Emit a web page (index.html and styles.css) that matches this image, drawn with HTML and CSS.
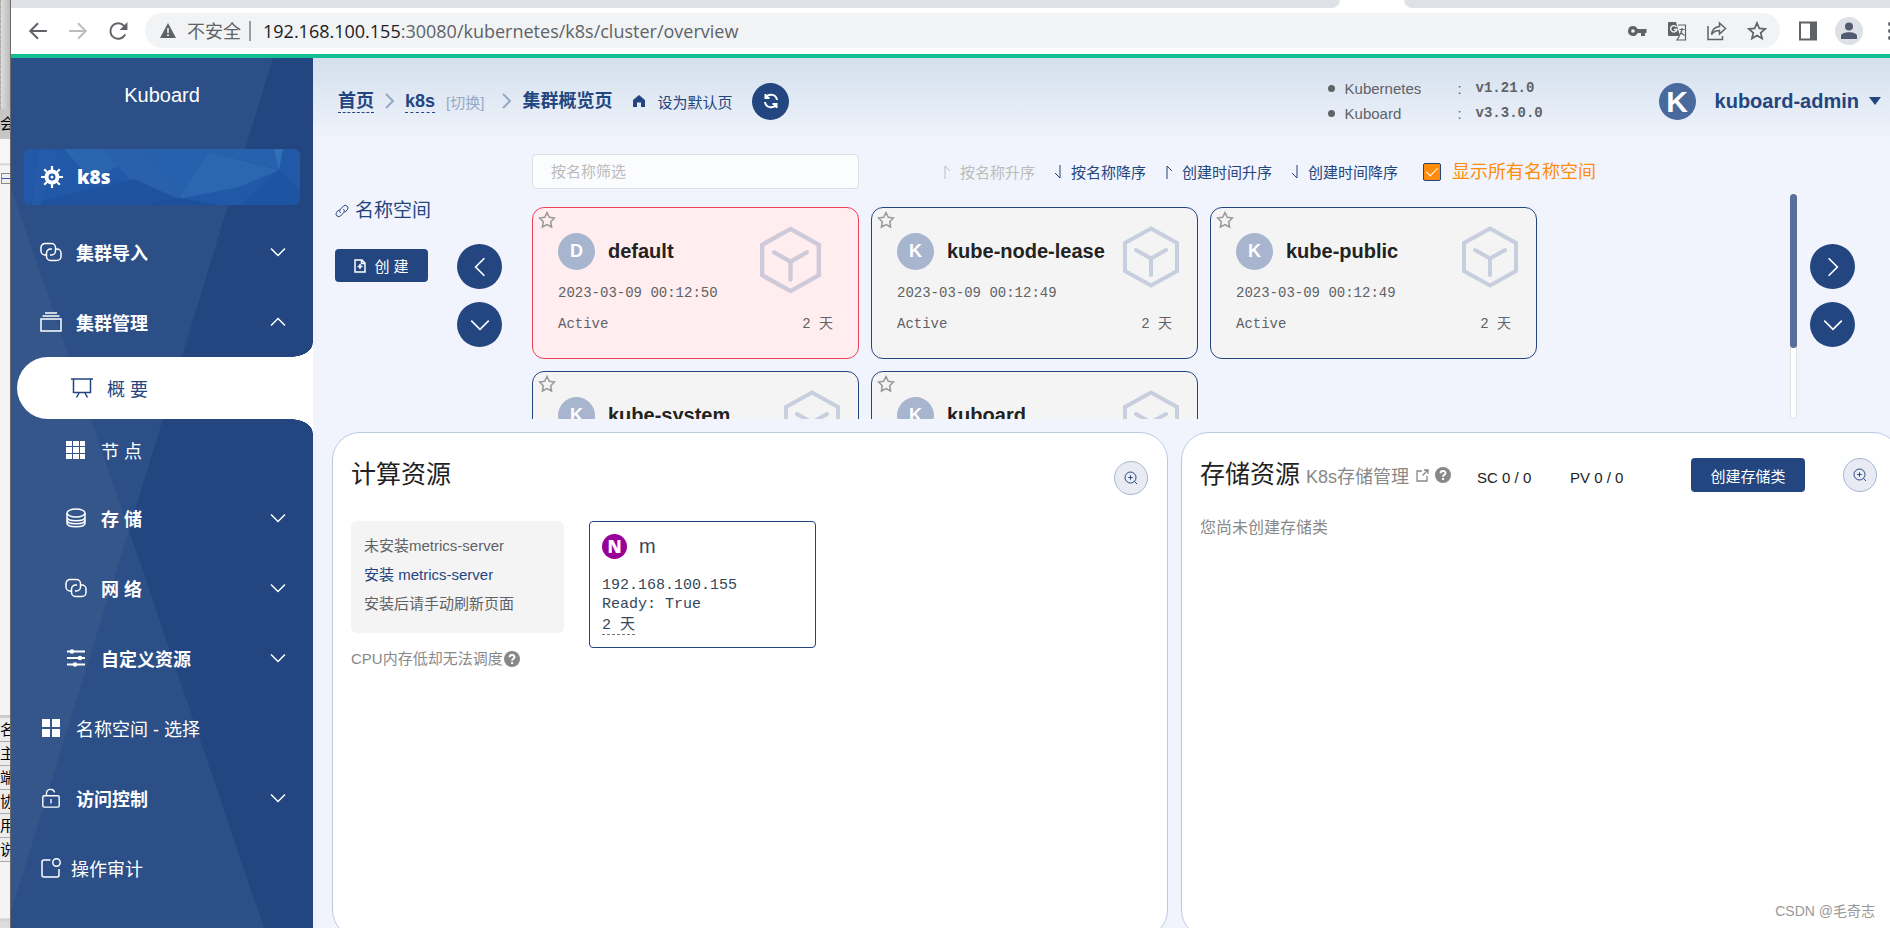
FILE: index.html
```html
<!DOCTYPE html>
<html lang="zh-CN">
<head>
<meta charset="utf-8">
<title>Kuboard</title>
<link rel="stylesheet" href="styles.css">
</head>
<body>
<svg class="sprite" aria-hidden="true">
  <symbol id="i-down" viewBox="0 0 16 16"><path d="M1 4.500l7 7 7-7"/></symbol>
  <symbol id="i-up" viewBox="0 0 16 16"><path d="M1 11.500l7-7 7 7"/></symbol>
  <symbol id="i-right" viewBox="0 0 16 16"><path d="M4.500 1l7 7-7 7"/></symbol>
  <symbol id="i-left" viewBox="0 0 16 16"><path d="M11.500 1l-7 7 7 7"/></symbol>
  <symbol id="i-sep" viewBox="0 0 9 16"><path d="M1 1l7 7-7 7"/></symbol>
  <symbol id="i-link" viewBox="0 0 22 20"><path d="M6 13H5a4 4 0 0 1-4-4V5.500a4 4 0 0 1 4-4h6.500a4 4 0 0 1 4 4V9a4 4 0 0 1-4 4H10M16 7h1a4 4 0 0 1 4 4v3.500a4 4 0 0 1-4 4h-6.500a4 4 0 0 1-4-4V11a4 4 0 0 1 4-4H12"/></symbol>
  <symbol id="i-star" viewBox="0 0 18 18"><path d="M9 1.500l2.300 4.800 5.200.7-3.800 3.700.9 5.300L9 13.500 4.400 16l.9-5.300L1.500 7l5.200-.7z"/></symbol>
  <symbol id="i-cube" viewBox="0 0 56 62"><path stroke-width="4" d="M28 2.500L54 17v28L28 59.500 2 45V17z"/><path stroke-width="4" stroke-linecap="round" d="M13 24l15 8.500L43 24M28 32.500V49"/></symbol>
  <symbol id="i-zoom" viewBox="0 0 14 14"><circle cx="6.500" cy="6.500" r="5.500"/><path d="M4.300 6.500h4.400M6.500 4.300v4.400M10.500 10.500l2.500 2.500"/></symbol>
  <symbol id="i-help" viewBox="0 0 16 16"><circle cx="8" cy="8" r="8" fill="#888" stroke="none"/><path stroke="#fff" stroke-width="2" d="M5.600 6.300c0-3.200 4.900-3.100 4.900-.2 0 1.700-2.400 1.700-2.400 3.600M8.100 11v2"/></symbol>
  <symbol id="i-asc" viewBox="0 0 8 14"><path d="M2 14V1l5 5"/></symbol>
  <symbol id="i-desc" viewBox="0 0 8 14"><path d="M6 0v13L1 8"/></symbol>
</svg>

<div class="desktop">
  <div class="behind" aria-hidden="true">
    <div class="behind-top"></div>
    <div class="behind-tab">会</div>
    <div class="behind-tree"><span class="tree-box"></span></div>
    <div class="behind-blank"></div>
    <div class="behind-row">名</div>
    <div class="behind-row">主</div>
    <div class="behind-row">端</div>
    <div class="behind-row">协</div>
    <div class="behind-row">用</div>
    <div class="behind-row">说</div>
    <div class="behind-foot"></div>
  </div>

  <div class="window">
    <div class="tabs"><div class="tabs-left"></div><div class="tabs-right"></div></div>
    <div class="toolbar">
      <button class="nav" aria-label="后退"><svg viewBox="0 0 18 18"><path d="M17 9H2M9 2L2 9l7 7"/></svg></button>
      <button class="nav nav-off" aria-label="前进"><svg viewBox="0 0 18 18"><path d="M1 9h15M9 2l7 7-7 7"/></svg></button>
      <button class="nav" aria-label="刷新"><svg viewBox="0 0 18 18"><path d="M15.500 12A7 7 0 1 1 14.500 4.500L16 6.500"/><path fill="#5f6368" stroke="none" d="M17.500 1v7h-7z"/></svg></button>
      <div class="address">
        <svg class="warn" viewBox="0 0 16 15"><path fill="#5f6368" d="M8 0l8 15H0z"/><path fill="#f1f3f4" d="M7.200 5h1.600v5H7.200zM7.200 11.300h1.600v1.700H7.200z"/></svg>
        <span class="insecure">不安全</span>
        <span class="url"><b>192.168.100.155</b>:30080/kubernetes/k8s/cluster/overview</span>
        <svg class="tool" viewBox="0 0 20 20"><path fill="#5f6368" fill-rule="evenodd" d="M6 5a5 5 0 1 0 4.600 7H14v3h4v-3h1.500V8h-9A5 5 0 0 0 6 5zm0 3.200a1.800 1.800 0 1 1 0 3.600 1.800 1.800 0 0 1 0-3.600z"/></svg>
        <svg class="tool" viewBox="0 0 20 20"><path fill="#5f6368" d="M2 1h7l4 14H2a1.500 1.500 0 0 1-1-1V2a1 1 0 0 1 1-1z"/><path fill="none" stroke="#f1f3f4" stroke-width="1.400" d="M9.500 6A3.200 3.200 0 1 0 10 8.500H7"/><path fill="none" stroke="#5f6368" stroke-width="1.200" d="M11 4h7.500v15H10l2.500-4M12.500 8.500h5M15 7v1.500c0 3-1 4-2.500 5.500M13.500 10.500c1 2 2 3 4 4"/></svg>
        <svg class="tool" viewBox="0 0 20 20"><path fill="none" stroke="#5f6368" stroke-width="1.500" d="M1 5v13.500h14.500V15M12.500 2l6 5.500-6 5.500v-3.500c-4 0-6 1-8 4C5 9.500 7.500 6 12.500 5.500z"/></svg>
        <svg class="tool" viewBox="0 0 20 20"><path fill="none" stroke="#5f6368" stroke-width="1.700" d="M10 2l2.300 5.400 5.900.5-4.500 3.900 1.400 5.700L10 14.400l-5.100 3.100 1.400-5.700-4.500-3.900 5.900-.5z"/></svg>
      </div>
      <svg class="side-icon" viewBox="0 0 20 20"><path fill="none" stroke="#5f6368" stroke-width="2" d="M2 1.500h16v17H2z"/><path fill="#5f6368" d="M12 1h7v18h-7z"/></svg>
      <span class="profile"><svg viewBox="0 0 16 18"><circle cx="8" cy="4.500" r="4"/><path d="M0 17v-3c0-5 16-5 16 0v3z"/></svg></span>
      <svg class="dots" viewBox="0 0 4 20"><circle cx="2" cy="3" r="2"/><circle cx="2" cy="10" r="2"/><circle cx="2" cy="17" r="2"/></svg>
    </div>

    <div class="page">
      <aside class="sidebar">
        <svg class="facets" viewBox="0 0 302 870" preserveAspectRatio="none"><path fill="#34568a" d="M0 130l118 342L0 854z"/><path fill="#234681" d="M262 0h40v870h-49L118 472z"/></svg>
        <h1 class="brand">Kuboard</h1>
        <a class="cluster" href="#">
          <svg class="cluster-bg" viewBox="0 0 276 56" preserveAspectRatio="none"><path fill="#2159a8" d="M0 0h276v56H0z"/><path fill="#2a65b0" d="M40 0h78L94 17 68 32z"/><path fill="#2961ac" d="M76 0h42l37 50-48-18L94 17z"/><path fill="#2b66b0" d="M185 3l-30 47 60-12 40-17z"/><path fill="#2b68b2" d="M118 0h137v20l-70-17-30 47z" opacity=".6"/><path fill="#1f539f" d="M0 56l110-26 45 20 30 6z"/><path fill="#1d509b" d="M118 56l37-7 40 7z"/><path fill="#3070b6" d="M250 0h9l-4 21z"/><path fill="#1e55a3" d="M215 56l40-35 21 20v15z"/><path fill="#265ba9" d="M15 0L8 56h8L34 3z"/></svg>
          <svg class="ico" viewBox="0 0 22 22"><path stroke-width="2.200" d="M11 0v22M0 11h22M3.200 3.200l15.600 15.600M18.800 3.200L3.200 18.800"/><circle cx="11" cy="11" r="5.500" fill="#2159a8" stroke-width="4"/><circle cx="11" cy="11" r="1.500" fill="#fff" stroke="none"/></svg>
          <span>k8s</span>
        </a>
        <nav class="menu">
          <button class="item bold"><svg class="ico"><use href="#i-link"/></svg>集群导入<svg class="chev"><use href="#i-down"/></svg></button>
          <button class="item bold"><svg class="ico" viewBox="0 0 22 20"><path d="M1 7h20v12H1zM2.500 4h17M5 1h12"/></svg>集群管理<svg class="chev"><use href="#i-up"/></svg></button>
          <a class="item sub active" href="#"><svg class="ico" viewBox="0 0 22 20"><path d="M0 1h22M2.500 1v13.500h17V1M8 15l-2.500 4.500M14 15l2.500 4.500"/></svg>概 要</a>
          <a class="item sub node" href="#"><svg class="ico" viewBox="0 0 20 20"><path fill="#fff" stroke="none" d="M0 1h6v5H0zM7 1h6v5H7zM14 1h5v5h-5zM0 7h6v6H0zM7 7h6v6H7zM14 7h5v6h-5zM0 14h6v5H0zM7 14h6v5H7zM14 14h5v5h-5z"/></svg>节 点</a>
          <button class="item sub bold"><svg class="ico" viewBox="0 0 20 20"><ellipse cx="10" cy="5" rx="9" ry="4"/><path d="M1 5v4c0 5 18 5 18 0V5M1 9v3c0 5 18 5 18 0V9M1 12v3c0 5 18 5 18 0v-3"/></svg>存 储<svg class="chev"><use href="#i-down"/></svg></button>
          <button class="item sub bold"><svg class="ico"><use href="#i-link"/></svg>网 络<svg class="chev"><use href="#i-down"/></svg></button>
          <button class="item sub bold"><svg class="ico" viewBox="0 0 20 20"><path stroke-width="1.800" d="M1 3.500h18M1 10h18M1 16.500h18"/><g fill="#fff" stroke="none"><circle cx="6" cy="3.500" r="2.300"/><circle cx="14" cy="10" r="2.300"/><circle cx="9" cy="16.500" r="2.300"/></g></svg>自定义资源<svg class="chev"><use href="#i-down"/></svg></button>
          <a class="item" href="#"><svg class="ico" viewBox="0 0 20 20"><path fill="#fff" stroke="none" d="M1 1h8v8H1zM11 1h8v8h-8zM1 11h8v8H1zM11 11h8v8h-8z"/></svg>名称空间 - 选择</a>
          <button class="item bold"><svg class="ico" viewBox="0 0 20 22"><rect x="1" y="8.500" width="18" height="12.500" rx="1.500"/><path d="M5 8V6a4.600 4.600 0 0 1 9-1.200M10 12v5"/></svg>访问控制<svg class="chev"><use href="#i-down"/></svg></button>
          <a class="item audit" href="#"><svg class="ico" viewBox="0 0 20 20"><path d="M9.500 2H3a2 2 0 0 0-2 2v13a2 2 0 0 0 2 2h13a2 2 0 0 0 2-2v-6"/><circle cx="15.500" cy="4.500" r="3.700"/></svg>操作审计</a>
        </nav>
      </aside>

      <main class="main">
        <header class="head">
          <nav class="crumbs">
            <a class="crumb dashed" href="#">首页</a>
            <svg class="sep"><use href="#i-sep"/></svg>
            <a class="crumb dashed" href="#">k8s</a>
            <a class="switch" href="#">[切换]</a>
            <svg class="sep"><use href="#i-sep"/></svg>
            <span class="crumb">集群概览页</span>
          </nav>
          <a class="default" href="#"><svg viewBox="0 0 12 12"><path d="M6 0L0 5v7h4V7.500h4V12h4V5z"/></svg>设为默认页</a>
          <button class="refresh" aria-label="刷新页面"><svg viewBox="0 0 16 16"><path d="M14 7A6 6 0 0 0 3 4.500M2 9a6 6 0 0 0 11 2.500M2.500 1v4h4M13.500 15v-4h-4"/></svg></button>
          <ul class="versions">
            <li><span class="vname">Kubernetes</span><span class="colon">:</span><b>v1.21.0</b></li>
            <li><span class="vname">Kuboard</span><span class="colon">:</span><b>v3.3.0.0</b></li>
          </ul>
          <button class="user"><span class="user-pic">K</span>kuboard-admin<span class="caret"></span></button>
        </header>

        <section class="namespaces">
          <div class="ns-side">
            <a class="ns-title" href="#"><svg viewBox="0 0 14 14"><path d="M5.500 9A2.700 2.700 0 0 1 5.500 5.200L8.500 2a2.700 2.700 0 0 1 3.900 3.700L9.800 8.500M8.500 5a2.700 2.700 0 0 1 0 3.800L5.500 12a2.700 2.700 0 0 1-3.900-3.700L4.200 5.500"/></svg>名称空间</a>
            <button class="primary"><svg viewBox="0 0 12 14"><path d="M1 1h7l3 3v9H1zM6 5v5M3.500 7.500h5M7.500 1v3.500H11"/></svg>创 建</button>
          </div>
          <div class="rounds">
            <button class="round" aria-label="向左"><svg><use href="#i-left"/></svg></button>
            <button class="round" aria-label="向下"><svg><use href="#i-down"/></svg></button>
          </div>
          <div class="ns-center">
            <div class="filters">
              <input class="filter" type="text" placeholder="按名称筛选" aria-label="按名称筛选">
              <div class="sorts">
                <button class="sort" disabled><svg><use href="#i-asc"/></svg>按名称升序</button>
                <button class="sort"><svg><use href="#i-desc"/></svg>按名称降序</button>
                <button class="sort"><svg><use href="#i-asc"/></svg>创建时间升序</button>
                <button class="sort"><svg><use href="#i-desc"/></svg>创建时间降序</button>
              </div>
              <label class="all"><input type="checkbox" checked>显示所有名称空间</label>
            </div>
            <div class="scroller">
              <div class="cards">
                <article class="card current"><svg class="fav"><use href="#i-star"/></svg><svg class="cube"><use href="#i-cube"/></svg><h3><span class="letter">D</span>default</h3><p>2023-03-09 00:12:50</p><p class="state"><span>Active</span><span>2 天</span></p></article>
                <article class="card"><svg class="fav"><use href="#i-star"/></svg><svg class="cube"><use href="#i-cube"/></svg><h3><span class="letter">K</span>kube-node-lease</h3><p>2023-03-09 00:12:49</p><p class="state"><span>Active</span><span>2 天</span></p></article>
                <article class="card"><svg class="fav"><use href="#i-star"/></svg><svg class="cube"><use href="#i-cube"/></svg><h3><span class="letter">K</span>kube-public</h3><p>2023-03-09 00:12:49</p><p class="state"><span>Active</span><span>2 天</span></p></article>
                <article class="card"><svg class="fav"><use href="#i-star"/></svg><svg class="cube"><use href="#i-cube"/></svg><h3><span class="letter">K</span>kube-system</h3></article>
                <article class="card"><svg class="fav"><use href="#i-star"/></svg><svg class="cube"><use href="#i-cube"/></svg><h3><span class="letter">K</span>kuboard</h3></article>
              </div>
              <div class="track"><div class="thumb"></div></div>
            </div>
          </div>
          <div class="rounds">
            <button class="round" aria-label="向右"><svg><use href="#i-right"/></svg></button>
            <button class="round" aria-label="向下"><svg><use href="#i-down"/></svg></button>
          </div>
        </section>

        <div class="panels">
          <section class="panel compute">
            <div class="panel-head"><h2>计算资源</h2><button class="zoom" aria-label="放大"><svg><use href="#i-zoom"/></svg></button></div>
            <div class="compute-body">
              <div>
                <div class="metrics"><p>未安装metrics-server</p><a href="#">安装 metrics-server</a><p>安装后请手动刷新页面</p></div>
                <p class="note">CPU内存低却无法调度<svg class="help"><use href="#i-help"/></svg></p>
              </div>
              <article class="node-card">
                <h3><span class="node-mark">N</span>m</h3>
                <p>192.168.100.155</p><p>Ready: True</p><p class="age-line"><span class="age">2 天</span></p>
              </article>
            </div>
          </section>
          <section class="panel storage">
            <div class="panel-head">
              <h2>存储资源</h2>
              <a class="manage" href="#">K8s存储管理<svg viewBox="0 0 13 13"><path d="M6 2H1v10h10V7M8 1h4v4M12 1L6.500 6.500"/></svg></a>
              <svg class="help"><use href="#i-help"/></svg>
              <span class="stat">SC 0 / 0</span><span class="stat">PV 0 / 0</span>
              <button class="primary wide">创建存储类</button>
              <button class="zoom" aria-label="放大"><svg><use href="#i-zoom"/></svg></button>
            </div>
            <p class="empty">您尚未创建存储类</p>
          </section>
        </div>
      </main>
    </div>
  </div>
  <div class="watermark">CSDN @毛奇志</div>
</div>
</body>
</html>
```
FILE: styles.css
```css
* { box-sizing: border-box; }
body { margin: 0; font-family: "Liberation Sans", "Noto Sans CJK SC", sans-serif; font-size: 15px; color: #222; }
h1, h2, h3, p, ul { margin: 0; padding: 0; }
a { color: inherit; text-decoration: none; }
button { margin: 0; padding: 0; border: 0; background: none; color: inherit; font: inherit; cursor: pointer; }
svg { flex: none; fill: none; stroke: currentColor; }
.sprite { position: absolute; width: 0; height: 0; }

.desktop { display: flex; height: 100vh; overflow: hidden; position: relative; }

/* window behind the browser */
.behind { width: 11px; flex: none; overflow: hidden; display: flex; flex-direction: column; background: #f4f4f4; border-right: 1px solid #6a6a6a; color: #000; font-size: 15px; }
.behind-top { height: 109px; background: linear-gradient(90deg, #ddd, #bbb); border-left: 1px dashed #aaa; }
.behind-tab { height: 30px; line-height: 30px; background: #c6c6c6; }
.behind-tree { height: 52px; padding: 34px 0 0 1px; background: linear-gradient(#f6f6f6 24px, #ccc 25px, #f4f4f4 27px); }
.tree-box { display: block; width: 12px; height: 11px; border: 1px solid #888; background: linear-gradient(#eee 4px, #35b 4px, #35b 5px, #eee 5px); }
.behind-blank { flex: 1; border-bottom: 3px solid #ccc; }
.behind-row { height: 24px; line-height: 23px; border-bottom: 1px solid #aaa; background: #ececec; }
.behind-foot { height: 66px; background: linear-gradient(#f4f4f4 56px, #ccc 57px, #ddd 60px); }

/* browser */
.window { flex: 1; min-width: 0; display: flex; flex-direction: column; background: #fff; }
.tabs { display: flex; gap: 64px; height: 8px; flex: none; }
.tabs-left { flex: 1329; background: #dee1e6; border-bottom-right-radius: 8px; }
.tabs-right { flex: 486; background: #dee1e6; border-bottom-left-radius: 8px; }
.toolbar { display: flex; align-items: center; height: 50px; flex: none; padding: 0 0 1px 17px; border-bottom: 4px solid #12be92; color: #5f6368; }
.nav { display: flex; width: 20px; margin-right: 20px; }
.nav svg { width: 20px; height: 20px; stroke-width: 1.8; }
.nav-off { color: #bbbdbf; }
.address { flex: 1; display: flex; align-items: center; height: 35px; padding: 0 13px 0 15px; margin-left: -3px; border-radius: 18px; background: #f1f3f4; font: 18px "Open Sans", "Noto Sans CJK SC", sans-serif; }
.warn { width: 16px; height: 15px; stroke: none; }
.insecure { margin-left: 11px; padding-right: 8px; border-right: 2px solid #9a9da0; line-height: 20px; }
.url { flex: 1; margin-left: 12px; }
.url b { color: #202124; font-weight: 400; }
.tool { width: 20px; height: 20px; margin-left: 20px; stroke: none; }
.side-icon { width: 20px; height: 20px; margin-left: 18px; stroke: none; }
.profile { display: flex; align-items: center; justify-content: center; width: 28px; height: 28px; margin: 0 25px 0 17px; border-radius: 50%; background: #dee1e6; }
.profile svg { width: 16px; height: 18px; fill: #505b70; stroke: none; }
.dots { width: 4px; height: 20px; fill: #5f6368; stroke: none; margin-right: -2px; }
.page { flex: 1; min-height: 0; display: flex; }

/* sidebar */
.sidebar { width: 302px; flex: none; position: relative; background: #2b4f86; color: #fff; }
.facets { position: absolute; inset: 0; width: 100%; height: 100%; stroke: none; }
.brand { position: relative; padding: 22px 0; font-size: 20px; font-weight: 400; line-height: 30px; text-align: center; }
.cluster { position: relative; isolation: isolate; display: flex; align-items: center; gap: 14px; height: 56px; margin: 17px 13px 12px; padding-left: 17px; border-radius: 6px; overflow: hidden; font: 900 19px "Open Sans", sans-serif; }
.cluster-bg { position: absolute; z-index: -1; inset: 0; width: 100%; height: 100%; stroke: none; }
.ico { width: 22px; height: 20px; stroke-width: 1.5; }
.cluster .ico { height: 22px; }
.menu { position: relative; display: flex; flex-direction: column; }
.item { display: flex; align-items: center; gap: 14px; height: 70px; padding: 0 27px 0 29px; font-size: 18px; }
.bold { font-weight: 700; }
.sub { padding-left: 54px; }
.chev { width: 16px; height: 16px; margin-left: auto; stroke-width: 1.5; }
.node { height: 62px; margin-bottom: 2px; }
.audit { gap: 9px; }
.active { position: relative; height: 62px; margin-left: 6px; border-radius: 31px 0 0 31px; background: #fff; color: #234681; }
.active::before, .active::after { content: ""; position: absolute; right: 0; width: 22px; height: 14px; }
.active::before { bottom: 100%; background: radial-gradient(22px 14px at 0 0, transparent 97%, #fff 100%); }
.active::after { top: 100%; background: radial-gradient(22px 14px at 0 100%, transparent 97%, #fff 100%); }

/* header */
.main { flex: 1; min-width: 0; display: flex; flex-direction: column; overflow: hidden; background: linear-gradient(#d3e0ed, #f1f4fc 86px); }
.head { display: flex; align-items: center; height: 86px; flex: none; padding: 0 9px 0 25px; color: #234681; }
.crumbs { display: flex; align-items: center; gap: 11px; }
.crumb { font-size: 18px; font-weight: 700; line-height: 22px; border-bottom: 1px solid transparent; white-space: nowrap; }
.dashed { border-bottom: 1px dashed #234681; }
.sep { width: 9px; height: 16px; stroke: #96a8c8; stroke-width: 2; }
.switch { margin-right: 7px; color: #96a8c8; }
.default { display: flex; align-items: center; gap: 12px; margin-left: 21px; }
.default svg { width: 12px; height: 12px; fill: currentColor; stroke: none; }
.refresh { display: flex; align-items: center; justify-content: center; width: 37px; height: 37px; margin-left: 20px; border-radius: 50%; background: #234681; color: #fff; }
.refresh svg { width: 16px; height: 16px; stroke-width: 2; }
.versions { width: 331px; margin-left: auto; list-style: none; color: #606266; line-height: 25px; }
.versions li { display: flex; align-items: center; }
.versions li::before { content: ""; width: 7px; height: 7px; margin-right: 10px; border-radius: 50%; background: currentColor; }
.vname { width: 113px; }
.colon { width: 18px; }
.versions b { font-family: "Liberation Mono", monospace; font-size: 14px; }
.user { display: flex; align-items: center; font-size: 20px; font-weight: 700; }
.user-pic { width: 37px; height: 37px; margin-right: 19px; border-radius: 50%; background: #486a9c; color: #fff; font-size: 30px; line-height: 37px; text-align: center; }
.caret { margin-left: 10px; border: 6px solid transparent; border-top: 8px solid #234681; border-bottom: 0; }

/* namespaces */
.namespaces { display: grid; grid-template-columns: 122px 75px 1fr 45px; flex: none; padding: 0 35px 13px 22px; }
.ns-side { padding-top: 55px; display: flex; flex-direction: column; align-items: flex-start; gap: 26px; }
.ns-title { display: flex; align-items: center; gap: 6px; font-size: 19px; line-height: 24px; color: #234681; }
.ns-title svg { width: 14px; height: 14px; }
.primary { display: flex; align-items: center; justify-content: center; gap: 8px; width: 93px; height: 33px; border-radius: 4px; background: #234681; color: #fff; font-size: 15px; }
.primary svg { width: 12px; height: 14px; stroke-width: 1.5; }
.wide { width: 114px; height: 34px; }
.rounds { padding-top: 100px; display: flex; flex-direction: column; gap: 13px; }
.round { display: flex; align-items: center; justify-content: center; width: 45px; height: 45px; border-radius: 50%; background: #234681; color: #fff; }
.round svg { width: 20px; height: 20px; stroke-width: 1.3; }
.ns-center { min-width: 0; padding-right: 13px; }
.filters { display: flex; align-items: center; padding: 10px 0 5px; color: #234681; }
.filter { width: 327px; height: 35px; padding: 0 18px; border: 1px solid #dcdfe6; border-radius: 4px; background: #fbfcfe; font: inherit; }
.filter::placeholder { color: #bbb; }
.sorts { display: flex; gap: 19px; margin-left: 84px; }
.sort { display: flex; align-items: center; gap: 9px; color: #234681; }
.sort:disabled { color: #bbb; }
.sort svg { width: 8px; height: 14px; }
.all { display: flex; align-items: center; gap: 11px; margin-left: 25px; font-size: 18px; line-height: 20px; color: #ff8c0a; white-space: nowrap; }
.all input { appearance: none; width: 18px; height: 18px; margin: 0; border: 1px solid #234681; border-radius: 2px; background: #ff8c0a; display: grid; place-items: center; }
.all input::after { content: ""; width: 5px; height: 10px; border: solid #fff; border-width: 0 1px 1px 0; rotate: 45deg; margin-bottom: 3px; }
.scroller { display: flex; height: 225px; overflow: hidden; }
.cards { flex: 1; display: grid; grid-template-columns: repeat(auto-fill, 327px); grid-auto-rows: 152px; gap: 12px; padding-top: 13px; }
.card { position: relative; padding: 25px 25px 0 25px; border: 1px solid #234681; border-radius: 12px; background: #f4f4f4; font: 14px/18px "Liberation Mono", "Noto Sans CJK SC", monospace; color: #606266; }
.current { border-color: #ee4059; background: #ffedef; }
.fav { position: absolute; top: 3px; left: 5px; width: 18px; height: 18px; color: #999; stroke-width: 1.5; }
.cube { position: absolute; top: 18px; right: 18px; width: 56px; height: 62px; color: #c7cfde; }
.current .cube { right: 37px; width: 61px; height: 68px; color: #cfcada; }
.card h3 { display: flex; align-items: center; gap: 13px; margin-bottom: 14px; font: 700 20px/37px "Liberation Sans", sans-serif; color: #222; }
.letter { width: 37px; height: 37px; border-radius: 50%; background: #a7b5ce; color: #fff; font-size: 18px; text-align: center; }
.state { display: flex; justify-content: space-between; margin-top: 13px; }
.track { width: 7px; border: 1px solid #e2e2e2; border-radius: 4px; background: #fff; }
.thumb { width: 7px; height: 154px; margin: -1px; border-radius: 4px; background: #56709b; }

/* panels, running slightly past the visible corner */
.panels { flex: 1; display: grid; grid-template-columns: 836fr 720fr; gap: 13px; margin: 0 -11px -10px 19px; }
.panel { padding: 24px 18px; border: 1px solid #bcc9e2; border-radius: 28px; background: #fff; }
.panel-head { display: flex; align-items: center; height: 36px; }
.panel h2 { font-size: 25px; font-weight: 400; line-height: 32px; padding-bottom: 2px; white-space: nowrap; }
.zoom { display: flex; align-items: center; justify-content: center; width: 34px; height: 34px; border: 1px solid #a7b6d0; border-radius: 50%; background: #e8ebf3; color: #234681; }
.zoom svg { width: 14px; height: 14px; }
.compute .zoom { margin: 6px 1px 0 auto; }
.compute-body { display: flex; align-items: flex-start; gap: 25px; margin-top: 28px; }
.metrics { display: flex; flex-direction: column; align-items: flex-start; gap: 9px; width: 213px; height: 112px; padding: 15px 13px; border-radius: 6px; background: #f4f4f4; color: #606266; line-height: 20px; }
.metrics a { color: #234681; }
.note { display: flex; align-items: center; gap: 1px; margin-top: 16px; line-height: 20px; color: #888; }
.help { width: 16px; height: 16px; }
.node-card { width: 227px; height: 127px; padding: 12px; border: 1px solid #234681; border-radius: 4px; font: 15px/19px "Liberation Mono", "Noto Sans CJK SC", monospace; color: #34475c; }
.node-card h3 { display: flex; align-items: center; gap: 12px; margin-bottom: 17px; font: 20px/25px "Liberation Sans", sans-serif; }
.node-mark { width: 25px; height: 25px; border-radius: 50%; background: #909; color: #fff; font: 800 17px/25px "Open Sans", sans-serif; text-align: center; }
.age-line { padding-top: 2px; }
.age { border-bottom: 1px dashed #777; }
.manage { display: flex; align-items: center; gap: 7px; margin: 0 6px 0 6px; font-size: 18px; color: #888; white-space: nowrap; }
.manage svg { width: 13px; height: 13px; stroke-width: 1.3; }
.stat { width: 93px; padding-top: 4px; white-space: nowrap; }
.help + .stat { margin-left: 26px; }
.storage .zoom { margin: 0 5px 0 38px; }
.storage .wide { margin-left: auto; }
.empty { margin-top: 23px; font-size: 16px; line-height: 24px; color: #888; }
.watermark { position: absolute; right: 15px; bottom: 7px; font-size: 14px; line-height: 20px; color: #999; }
```
